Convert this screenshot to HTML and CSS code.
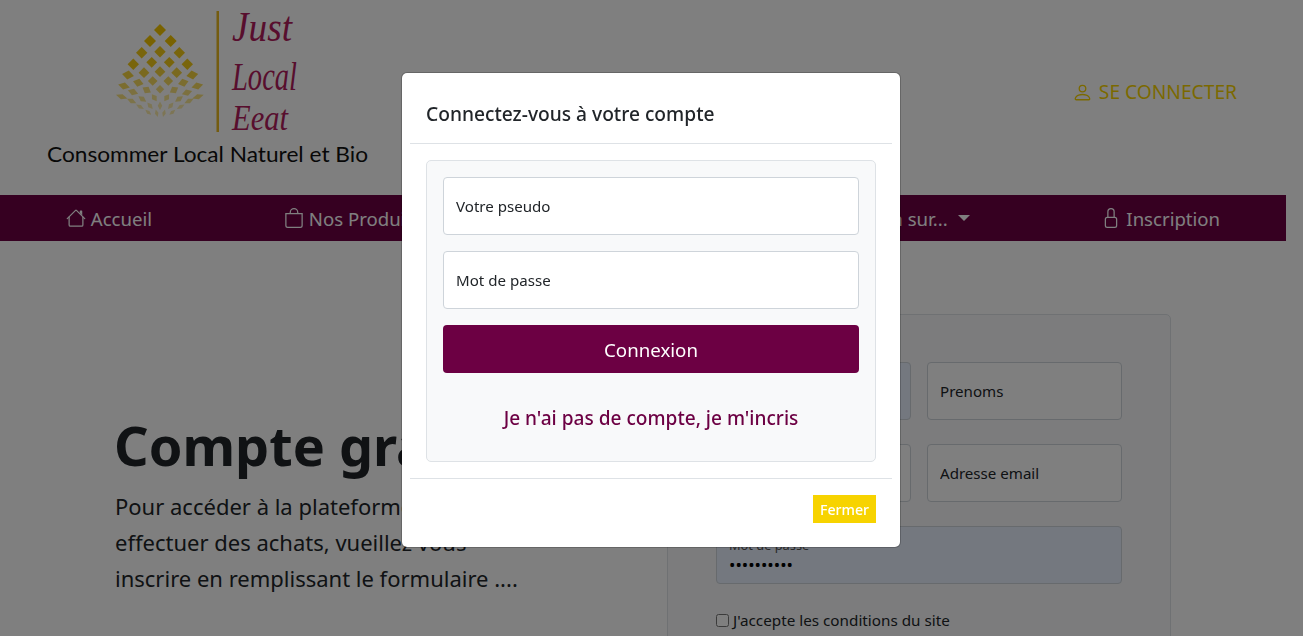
FILE: index.html
```html
<!DOCTYPE html>
<html lang="fr">
<head>
<meta charset="utf-8">
<title>Just Local Eeat</title>
<link rel="stylesheet" href="styles.css">
</head>
<body>
<div class="page">
  <header class="site-header">
    <svg class="logo" viewBox="40 0 340 175" width="340" height="175" role="img" aria-label="Just Local Eeat">
      <defs><path id="d" d="M0-6 6 0 0 6-6 0z"/></defs>
      <g fill="#f2c500">
        <use href="#d" transform="translate(160 30)"/>
        <use href="#d" transform="translate(150 41)"/><use href="#d" transform="translate(170.7 41)"/>
        <g opacity=".9">
          <use href="#d" transform="translate(141.7 52.7) scale(.95)"/><use href="#d" transform="translate(160 51.7) scale(.95)"/><use href="#d" transform="translate(179.3 52.7) scale(.95)"/>
          <use href="#d" transform="translate(133.3 64.3) scale(.95)"/><use href="#d" transform="translate(151.7 62.3) scale(.9)"/><use href="#d" transform="translate(169.3 62.3) scale(.9)"/><use href="#d" transform="translate(187.3 64.3) scale(.95)"/>
        </g>
        <g opacity=".75">
          <use href="#d" transform="translate(128 75) rotate(10) scale(1 .75)"/><use href="#d" transform="translate(144 72.7) scale(.9)"/><use href="#d" transform="translate(160 71.7) scale(.9)"/><use href="#d" transform="translate(176.7 72.7) scale(.9)"/><use href="#d" transform="translate(192.3 75) rotate(-10) scale(1 .75)"/>
        </g>
        <g opacity=".62">
          <use href="#d" transform="translate(124 86) rotate(15) scale(1 .62)"/><use href="#d" transform="translate(138.3 82.7) rotate(15) scale(.9 .68)"/><use href="#d" transform="translate(152.7 81) scale(.8)"/><use href="#d" transform="translate(168.3 81) scale(.8)"/><use href="#d" transform="translate(183.3 82.7) rotate(-15) scale(.9 .68)"/><use href="#d" transform="translate(197.3 86) rotate(-15) scale(1 .62)"/>
        </g>
        <g opacity=".5">
          <use href="#d" transform="translate(121.7 96.7) rotate(18) scale(1 .45)"/><use href="#d" transform="translate(133 92) rotate(18) scale(.9 .55)"/><use href="#d" transform="translate(146.7 90) rotate(30) scale(.8 .62)"/><use href="#d" transform="translate(160 89.3) scale(.7)"/><use href="#d" transform="translate(174 90) rotate(-30) scale(.8 .62)"/><use href="#d" transform="translate(187 92.7) rotate(-18) scale(.9 .55)"/><use href="#d" transform="translate(198 96.7) rotate(-18) scale(1 .45)"/>
        </g>
        <g opacity=".42">
          <use href="#d" transform="translate(131.7 101) rotate(25) scale(.85 .4)"/><use href="#d" transform="translate(142.3 99) rotate(35) scale(.8 .45)"/><use href="#d" transform="translate(154.3 97.7) rotate(55) scale(.7 .48)"/><use href="#d" transform="translate(166.7 97.7) rotate(-55) scale(.7 .48)"/><use href="#d" transform="translate(179 99) rotate(-35) scale(.8 .45)"/><use href="#d" transform="translate(189 101) rotate(-25) scale(.85 .4)"/>
        </g>
        <g opacity=".33">
          <use href="#d" transform="translate(140 106.7) rotate(30) scale(.75 .33)"/><use href="#d" transform="translate(150 105.7) rotate(50) scale(.7 .38)"/><use href="#d" transform="translate(160 105.7) rotate(90) scale(.7 .38)"/><use href="#d" transform="translate(170.7 105.7) rotate(-50) scale(.7 .38)"/><use href="#d" transform="translate(180.7 106.7) rotate(-30) scale(.75 .33)"/>
          <use href="#d" transform="translate(148.3 112.3) rotate(40) scale(.65 .3)"/><use href="#d" transform="translate(156.7 113.3) rotate(75) scale(.65 .3)"/><use href="#d" transform="translate(164 113.3) rotate(-75) scale(.65 .3)"/><use href="#d" transform="translate(172.3 112.3) rotate(-40) scale(.65 .3)"/>
        </g>
      </g>
      <rect class="logo-bar" x="216.5" y="11" width="2.5" height="121"/>
      <text class="logo-script logo-just" x="232" y="41" textLength="60" lengthAdjust="spacingAndGlyphs">Just</text>
      <text class="logo-script logo-local" x="232" y="90" textLength="65" lengthAdjust="spacingAndGlyphs">Local</text>
      <text class="logo-script logo-eeat" x="232" y="130" textLength="56" lengthAdjust="spacingAndGlyphs">Eeat</text>
      <text class="logo-slogan" x="47" y="162" textLength="321" lengthAdjust="spacingAndGlyphs">Consommer Local Naturel et Bio</text>
    </svg>
    <a class="login-link" href="#">
      <svg class="icon icon-login" viewBox="0 0 16 16" aria-hidden="true"><path d="M8 8a3 3 0 1 0 0-6 3 3 0 0 0 0 6zm2-3a2 2 0 1 1-4 0 2 2 0 0 1 4 0zm4 8c0 1-1 1-1 1H3s-1 0-1-1 1-4 6-4 6 3 6 4zm-1-.004c-.001-.246-.154-.986-.832-1.664C11.516 10.68 10.289 10 8 10c-2.29 0-3.516.68-4.168 1.332-.678.678-.83 1.418-.832 1.664h10z"/></svg>
      SE CONNECTER
    </a>
  </header>

  <nav class="main-nav">
    <a class="nav-link" href="#">
      <svg class="icon" viewBox="0 0 16 16" aria-hidden="true"><path d="M2 13.5V7h1v6.5a.5.5 0 0 0 .5.5h9a.5.5 0 0 0 .5-.5V7h1v6.5a1.5 1.5 0 0 1-1.5 1.5h-9A1.5 1.5 0 0 1 2 13.5zm11-11V6l-2-2V2.5a.5.5 0 0 1 .5-.5h1a.5.5 0 0 1 .5.5z"/><path d="M7.293 1.5a1 1 0 0 1 1.414 0l6.647 6.646a.5.5 0 0 1-.708.708L8 2.207 1.354 8.854a.5.5 0 1 1-.708-.708L7.293 1.5z"/></svg>
      Accueil
    </a>
    <a class="nav-link" href="#">
      <svg class="icon" viewBox="0 0 16 16" aria-hidden="true"><path d="M8 1a2.5 2.5 0 0 1 2.5 2.5V4h-5v-.5A2.5 2.5 0 0 1 8 1zm3.5 3v-.5a3.5 3.5 0 1 0-7 0V4H1v10a2 2 0 0 0 2 2h10a2 2 0 0 0 2-2V4h-3.5zM2 5h12v9a1 1 0 0 1-1 1H3a1 1 0 0 1-1-1V5z"/></svg>
      Nos Produits
    </a>
    <a class="nav-link nav-link-wide" href="#">Information sur...<span class="caret"></span></a>
    <a class="nav-link" href="#">
      <svg class="icon" viewBox="0 0 16 16" aria-hidden="true"><path d="M8 1a2 2 0 0 1 2 2v4H6V3a2 2 0 0 1 2-2zm3 6V3a3 3 0 0 0-6 0v4a2 2 0 0 0-2 2v5a2 2 0 0 0 2 2h6a2 2 0 0 0 2-2V9a2 2 0 0 0-2-2zM5 8h6a1 1 0 0 1 1 1v5a1 1 0 0 1-1 1H5a1 1 0 0 1-1-1V9a1 1 0 0 1 1-1z"/></svg>
      Inscription
    </a>
  </nav>

  <main class="signup">
    <section class="hero">
      <h1 class="hero-title">Compte gratuit</h1>
      <p class="hero-text">Pour accéder à la plateforme et<br>effectuer des achats, vueillez vous<br>inscrire en remplissant le formulaire ....</p>
    </section>
    <form class="signup-card">
      <div class="signup-grid">
        <input class="field field-auto" type="text" placeholder="Nom">
        <input class="field" type="text" placeholder="Prenoms">
        <input class="field" type="text" placeholder="Téléphone">
        <input class="field" type="text" placeholder="Adresse email">
        <div class="field field-auto field-password">
          <span class="float-label">Mot de passe</span>
          <span class="dots">••••••••••</span>
        </div>
      </div>
      <label class="terms"><input class="check" type="checkbox"> J'accepte les conditions du site</label>
    </form>
  </main>
</div>

<div class="backdrop"></div>

<div class="modal">
  <div class="modal-head"><h2 class="modal-title">Connectez-vous à votre compte</h2></div>
  <div class="modal-body">
    <form class="login-card">
      <input class="field field-modal" type="text" placeholder="Votre pseudo">
      <input class="field field-modal" type="password" placeholder="Mot de passe">
      <button class="btn-login" type="button">Connexion</button>
      <a class="register-link" href="#">Je n'ai pas de compte, je m'incris</a>
    </form>
  </div>
  <div class="modal-foot"><button class="btn-close" type="button">Fermer</button></div>
</div>
</body>
</html>
```

FILE: styles.css
```css
* { box-sizing: border-box; }
html, body { margin: 0; height: 100%; overflow: hidden; }
body {
  background: #fff;
  color: #212529;
  font-family: "Noto Sans", "Open Sans", "Liberation Sans", sans-serif;
  font-size: 16px;
}
a { text-decoration: none; color: inherit; }

.page { width: 1286px; }

.site-header {
  height: 195px;
  display: flex;
  justify-content: space-between;
  align-items: flex-start;
  padding-left: 40px;
}
.logo { display: block; }
.logo-bar { fill: #e8b820; }
.logo-script {
  font-family: "Liberation Serif", serif;
  font-style: italic;
  fill: #b01c5c;
}
.logo-just { font-size: 42px; }
.logo-local { font-size: 40px; }
.logo-eeat { font-size: 35px; }
.logo-slogan {
  font-family: "Lato", sans-serif;
  font-size: 20.5px;
  fill: #111;
}
.login-link {
  display: flex;
  align-items: center;
  gap: 6px;
  margin: 79px 49px 0 0;
  color: #f7d300;
  font-size: 19.2px;
  line-height: 26px;
}
.icon { width: 20px; height: 20px; fill: currentColor; flex: none; }
.icon-login { width: 21px; height: 21px; }

.main-nav {
  height: 46px;
  background: #6c0043;
  display: flex;
  justify-content: space-around;
  align-items: center;
  color: #fff;
  font-size: 18.6px;
}
.nav-link { display: flex; align-items: center; gap: 5px; }
.nav-link-wide { width: 417px; justify-content: flex-end; gap: 0; }
.caret {
  margin-left: 10px;
  border-top: 6px solid currentColor;
  border-left: 6px solid transparent;
  border-right: 6px solid transparent;
}

.signup {
  display: flex;
  padding: 73px 0 0 115px;
  gap: 0;
}
.hero { width: 552px; flex: none; padding-top: 95px; }
.hero-title {
  margin: 0 0 7px -1px;
  font-size: 54px;
  line-height: 72px;
  font-weight: 700;
  color: #212529;
}
.hero-text {
  margin: 0;
  font-size: 22px;
  line-height: 36px;
}

.signup-card {
  width: 504px;
  height: 400px;
  flex: none;
  padding: 47px 48px;
  background: #f8f9fa;
  border: 1px solid #dee2e6;
  border-radius: 5px;
}
.signup-grid {
  display: grid;
  grid-template-columns: 195px 195px;
  gap: 24px 16px;
}
.field {
  display: block;
  height: 58px;
  width: 100%;
  padding: 0 12px;
  background: #fff;
  border: 1px solid #ced4da;
  border-radius: 4px;
  font: inherit;
  font-size: 15.1px;
  color: #212529;
}
.field::placeholder { color: #212529; opacity: 1; }
.field-auto { background: #e8f0fe; }
.field-password { grid-column: 1 / 3; padding-top: 10px; }
.float-label { display: block; font-size: 12.8px; line-height: 16px; color: #555; }
.dots { display: block; font-size: 17px; line-height: 20px; margin-top: 2px; color: #000; }
.terms {
  display: flex;
  align-items: center;
  gap: 4px;
  margin-top: 26px;
  font-size: 15.25px;
  line-height: 20px;
}
.check { margin: 0; width: 13px; height: 13px; }

.backdrop {
  position: fixed;
  inset: 0;
  background: rgba(0, 0, 0, .5);
}
.modal {
  position: fixed;
  left: 401px;
  top: 72px;
  width: 500px;
  height: 476px;
  padding: 0 8px;
  background: #fff;
  border: 1px solid rgba(0, 0, 0, .2);
  background-clip: padding-box;
  border-radius: 6px;
}
.modal-head {
  height: 71px;
  display: flex;
  align-items: center;
  padding: 11px 16px 0;
  border-bottom: 1px solid #dee2e6;
}
.modal-title {
  margin: 0;
  font-size: 19.2px;
  font-weight: 500;
  line-height: 24px;
}
.modal-body { padding: 16px; }
.login-card {
  height: 302px;
  padding: 16px;
  display: flex;
  flex-direction: column;
  gap: 16px;
  background: #f8f9fa;
  border: 1px solid #dee2e6;
  border-radius: 5px;
}
.field-modal { flex: none; }
.btn-login {
  height: 48px;
  flex: none;
  background: #6c0043;
  color: #fff;
  border: 0;
  border-radius: 4px;
  font: inherit;
  font-size: 18.7px;
}
.register-link {
  margin-top: 17px;
  text-align: center;
  color: #6c0043;
  font-size: 19.1px;
  font-weight: 500;
  line-height: 24px;
}
.modal-foot {
  display: flex;
  justify-content: flex-end;
  padding: 16px;
  border-top: 1px solid #dee2e6;
}
.btn-close {
  width: 63px;
  height: 28px;
  padding: 0;
  background: #f7d300;
  color: #fff;
  border: 0;
  font: inherit;
  font-size: 14.2px;
  font-weight: 500;
}
```
